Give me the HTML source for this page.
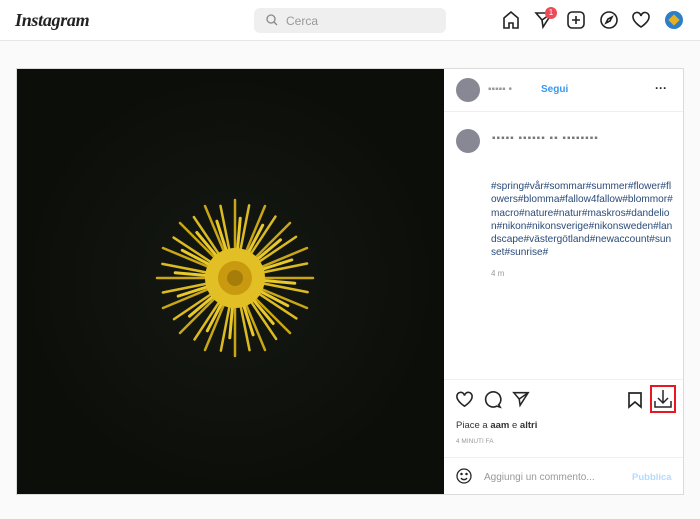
<!DOCTYPE html>
<html><head><meta charset="utf-8"><style>
*{margin:0;padding:0;box-sizing:border-box}
body{width:700px;height:519px;background:#fafafa;font-family:"Liberation Sans",sans-serif;position:relative;overflow:hidden}
.hdr{position:absolute;left:0;top:0;width:700px;height:41px;background:#fff;border-bottom:1px solid #e6e6e6}
.logo{position:absolute;left:15px;top:10px;font-family:"Liberation Serif",serif;font-style:italic;font-size:18px;font-weight:bold;color:#222;letter-spacing:-0.3px}
.search{position:absolute;left:254px;top:8px;width:192px;height:25px;background:#efefef;border-radius:6px;font-size:12px;color:#999;padding:6px 0 0 32px}
.ic{position:absolute;top:10px}
.post{position:absolute;left:16px;top:68px;width:668px;height:427px;background:#fff;border:1px solid #dbdbdb}
.img{position:absolute;left:0;top:0;width:427px;height:425px;background:radial-gradient(circle at 50% 50%,#141812 0,#0c0e0a 70%)}
.side{position:absolute;left:427px;top:0;width:239px;height:425px}
.t{position:absolute;font-size:10px;color:#262626}
</style></head><body>
<div class="hdr">
<div class="logo">Instagram</div>
<div class="search">Cerca</div>
<svg style="position:absolute;left:266px;top:14px" width="12" height="12" viewBox="0 0 12 12" fill="none" stroke="#888" stroke-width="1.3"><circle cx="5" cy="5" r="4"/><path d="M8 8l3 3"/></svg>
<svg class="ic" style="left:501px" width="20" height="20" viewBox="0 0 20 20" fill="none" stroke="#222" stroke-width="1.6"><path d="M3 8l7-6 7 6v10h-5v-5H8v5H3z"/></svg>
<svg class="ic" style="left:534px" width="20" height="20" viewBox="0 0 20 20" fill="none" stroke="#222" stroke-width="1.6"><path d="M2 3h16L9 17l-1-7zM8 10l10-7"/></svg>
<div style="position:absolute;left:545px;top:7px;width:12px;height:12px;border-radius:6px;background:#ed4956;color:#fff;font-size:8px;text-align:center;line-height:12px">1</div>
<svg class="ic" style="left:566px" width="20" height="20" viewBox="0 0 20 20" fill="none" stroke="#222" stroke-width="1.6"><rect x="2" y="2" width="16" height="16" rx="4"/><path d="M10 6v8M6 10h8"/></svg>
<svg class="ic" style="left:599px" width="20" height="20" viewBox="0 0 20 20" fill="none" stroke="#222" stroke-width="1.6"><circle cx="10" cy="10" r="8"/><path d="M13 7l-2 4-4 2 2-4z"/></svg>
<svg class="ic" style="left:631px" width="20" height="20" viewBox="0 0 20 20" fill="none" stroke="#222" stroke-width="1.6"><path d="M10 17S2 12 2 7a4 4 0 018-1 4 4 0 018 1c0 5-8 10-8 10z"/></svg>
<div style="position:absolute;left:665px;top:11px;width:18px;height:18px;border-radius:9px;background:#2a7fc8"><div style="margin:5px;width:8px;height:8px;background:#e8b020;transform:rotate(45deg)"></div></div>
</div>
<div class="post">
<div class="img">
<svg width="427" height="425" viewBox="0 0 427 425">
<g transform="translate(218,209)" stroke-linecap="round">
<g stroke="#c9a615" stroke-width="2.5">
<path d="M0 0L78 0M0 0L-78 0M0 0L0 78M0 0L0-78M0 0L55 55M0 0L-55 55M0 0L55-55M0 0L-55-55M0 0L72 30M0 0L-72 30M0 0L72-30M0 0L-72-30M0 0L30 72M0 0L-30 72M0 0L30-72M0 0L-30-72"/></g>
<g stroke="#dcbb22" stroke-width="2.5" transform="rotate(11)">
<path d="M0 0L74 0M0 0L-74 0M0 0L0 74M0 0L0-74M0 0L52 52M0 0L-52 52M0 0L52-52M0 0L-52-52M0 0L68 28M0 0L-68 28M0 0L68-28M0 0L-68-28M0 0L28 68M0 0L-28 68M0 0L28-68M0 0L-28-68"/></g>
<g stroke="#e8c82a" stroke-width="3" transform="rotate(5)">
<path d="M0 0L60 0M0 0L-60 0M0 0L0 60M0 0L0-60M0 0L42 42M0 0L-42 42M0 0L42-42M0 0L-42-42M0 0L55 23M0 0L-55 23M0 0L55-23M0 0L-55-23M0 0L23 55M0 0L-23 55M0 0L23-55M0 0L-23-55"/></g>
<circle r="30" fill="#e2c025"/><circle r="17" fill="#c99a10"/><circle r="8" fill="#a77d0a"/>
</g></svg>
</div>
<div class="side">
<div style="position:absolute;left:12px;top:9px;width:24px;height:24px;border-radius:12px;background:#556;opacity:.7"></div>
<div class="t" style="left:44px;top:15px;color:#999">▪▪▪▪▪ •</div>
<div class="t" style="left:97px;top:15px;color:#3897f0;font-weight:bold">Segui</div>
<div class="t" style="left:211px;top:12px;font-weight:bold;font-size:12px">···</div>
<div style="position:absolute;left:0;top:42px;width:239px;border-top:1px solid #efefef"></div>
<div style="position:absolute;left:12px;top:60px;width:24px;height:24px;border-radius:12px;background:#556;opacity:.7"></div>
<div class="t" style="left:48px;top:64px;color:#777;letter-spacing:1px">▪▪▪▪▪ ▪▪▪▪▪▪ ▪▪ ▪▪▪▪▪▪▪▪</div>
<div class="t" style="left:47px;top:111px;width:183px;line-height:13.3px;color:#2a4a78;word-break:break-all;font-size:10.1px">#spring#vår#sommar#summer#flower#flowers#blomma#fallow4fallow#blommor#macro#nature#natur#maskros#dandelion#nikon#nikonsverige#nikonsweden#landscape#västergötland#newaccount#sunset#sunrise#</div>
<div class="t" style="left:47px;top:200px;color:#999;font-size:8px">4 m</div>
<div style="position:absolute;left:0;top:310px;width:239px;border-top:1px solid #efefef"></div>
<svg style="position:absolute;left:11px;top:321px" width="19" height="19" viewBox="0 0 20 20" fill="none" stroke="#262626" stroke-width="1.7"><path d="M10 17S2 12 2 7a4 4 0 018-1 4 4 0 018 1c0 5-8 10-8 10z"/></svg>
<svg style="position:absolute;left:39px;top:321px" width="19" height="19" viewBox="0 0 20 20" fill="none" stroke="#262626" stroke-width="1.7"><path d="M16.5 15.5L18 18l-3.5-1A8 8 0 1116.5 15.5z"/></svg>
<svg style="position:absolute;left:68px;top:321px" width="18" height="18" viewBox="0 0 20 20" fill="none" stroke="#262626" stroke-width="1.7"><path d="M2 3h16L9 17l-1-7zM8 10l10-7"/></svg>
<svg style="position:absolute;left:183px;top:322px" width="16" height="18" viewBox="0 0 16 18" fill="none" stroke="#262626" stroke-width="1.7"><path d="M2 2h12v14l-6-5-6 5z"/></svg>
<div style="position:absolute;left:206px;top:316px;width:26px;height:28px;border:2px solid #e8191e"></div>
<svg style="position:absolute;left:210px;top:320px" width="18" height="20" viewBox="0 0 18 20" fill="none" stroke="#262626" stroke-width="1.5"><path d="M9 1v12M4 9l5 5 5-5M1 12v6h16v-6"/></svg>
<div class="t" style="left:12px;top:351px;font-size:9.5px;color:#333">Piace a <b>aam</b> e <b>altri</b></div>
<div class="t" style="left:12px;top:369px;font-size:6.5px;color:#999">4 MINUTI FA</div>
<div style="position:absolute;left:0;top:388px;width:239px;border-top:1px solid #efefef"></div>
<svg style="position:absolute;left:12px;top:399px" width="16" height="16" viewBox="0 0 16 16" fill="none" stroke="#262626" stroke-width="1.3"><circle cx="8" cy="8" r="7"/><path d="M5 10a3.5 3.5 0 006 0"/><circle cx="5.5" cy="6" r=".6" fill="#262626"/><circle cx="10.5" cy="6" r=".6" fill="#262626"/></svg>
<div class="t" style="left:40px;top:403px;color:#999">Aggiungi un commento...</div>
<div class="t" style="left:188px;top:403px;color:#b3dbff;font-weight:bold;font-size:9.5px">Pubblica</div>
</div>
</div>
</body></html>
